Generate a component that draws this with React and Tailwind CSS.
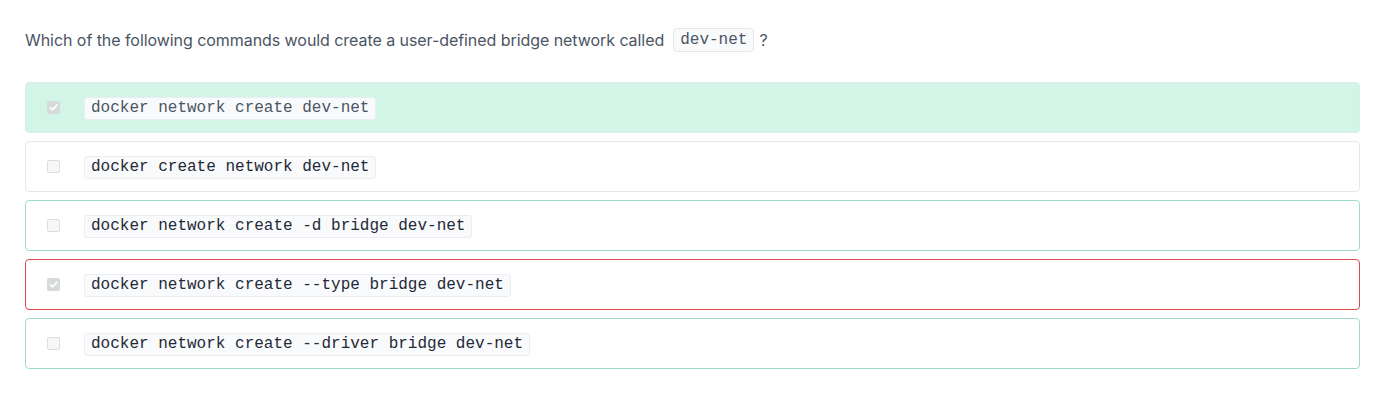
const OPTIONS = [
  { text: 'docker network create dev-net', checked: true, tone: 'selected' },
  { text: 'docker create network dev-net', checked: false, tone: 'plain' },
  { text: 'docker network create -d bridge dev-net', checked: false, tone: 'correct' },
  { text: 'docker network create --type bridge dev-net', checked: true, tone: 'wrong' },
  { text: 'docker network create --driver bridge dev-net', checked: false, tone: 'correct' }
];

const CARD_TONE = {
  selected: 'bg-[#d3f5e8] border-[#d9efe6]',
  plain: 'bg-white border-[#e5e7eb]',
  correct: 'bg-white border-[#9fdcc6]',
  wrong: 'bg-white border-[#e0464f]'
};

function Checkbox({ checked }) {
  if (checked) {
    return (
      <span className="flex h-[13px] w-[13px] items-center justify-center rounded-[2px] bg-[#d6dbd9]">
        <svg width="9" height="9" viewBox="0 0 10 10" fill="none">
          <path d="M1.5 5.2 L4 7.6 L8.6 2.4" stroke="#ffffff" strokeWidth="1.8" strokeLinecap="round" strokeLinejoin="round" />
        </svg>
      </span>
    );
  }
  return <span className="block h-[13px] w-[13px] rounded-[2px] border border-[#dedede] bg-[#f7f7f7]" />;
}

export default function App() {
  return (
    <div className="min-h-[407px] bg-white pl-[25px] pr-[38px] pt-[28px]" style={{ fontFamily: 'Inter, "Noto Sans", sans-serif' }}>
      <p className="flex items-center text-[16px] leading-[24px] tracking-[-0.06px] text-[#4b5563]">
        Which of the following commands would create a user-defined bridge network called
        <code className="ml-[9px] mr-[5px] rounded-[4px] border border-[#e5e7eb] bg-[#f9fafb] px-[6px] pt-[1px] text-[16px] leading-[21px] tracking-normal text-[#4b5563]" style={{ fontFamily: '"Liberation Mono", monospace' }}>
          dev-net
        </code>
        ?
      </p>

      <div className="mt-[30px] flex flex-col gap-[8px]">
        {OPTIONS.map((o) => (
          <label key={o.text} className={`flex h-[51px] items-center rounded-[4px] border ${CARD_TONE[o.tone]}`}>
            <span className="ml-[21px] mr-[24px] flex">
              <Checkbox checked={o.checked} />
            </span>
            <code
              className={`mt-[2px] rounded-[3px] border border-[#ebedf0] bg-[#f9fafb] px-[6px] text-[16px] leading-[21px] ${o.tone === 'selected' ? 'text-[#4b5563]' : 'text-[#1f2937]'}`}
              style={{ fontFamily: '"Liberation Mono", monospace' }}
            >
              {o.text}
            </code>
          </label>
        ))}
      </div>
    </div>
  );
}
